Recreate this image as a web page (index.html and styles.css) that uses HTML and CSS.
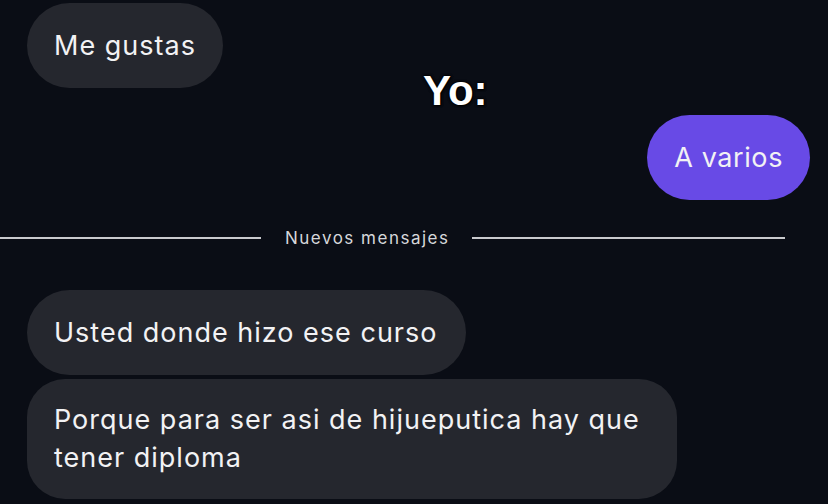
FILE: index.html
```html
<!DOCTYPE html>
<html lang="es">
<head>
<meta charset="utf-8">
<link rel="stylesheet" href="styles.css">
</head>
<body>
<div class="chat">
  <div class="bubble in first">Me gustas</div>
  <div class="caption">Yo:</div>
  <div class="bubble out">A varios</div>
  <div class="divider">
    <span class="line left"></span>
    <span class="label">Nuevos mensajes</span>
    <span class="line right"></span>
  </div>
  <div class="bubble in third">Usted donde hizo ese curso</div>
  <div class="bubble in fourth">Porque para ser asi de hijueputica hay que<br>tener diploma</div>
</div>
</body>
</html>
```
FILE: styles.css
```css
html, body {
  margin: 0;
  padding: 0;
  background: #0a0d15;
  width: 828px;
  height: 504px;
  overflow: hidden;
}
.chat {
  position: relative;
  display: flex;
  flex-direction: column;
  align-items: flex-start;
  font-family: Inter, "Liberation Sans", Arial, sans-serif;
  color: #f2f2f4;
}
.bubble {
  font-size: 27px;
  letter-spacing: 1px;
  line-height: 41px;
  border-radius: 43px;
  padding: 22px 27px;
  box-sizing: border-box;
}
.in {
  background: #25272e;
  margin-left: 27px;
}
.first {
  margin-top: 3px;
}
.out {
  align-self: flex-end;
  margin-right: 18px;
  margin-top: 27px;
  background: #684ae6;
  padding: 22px 27px 22px 27px;
  letter-spacing: 0.6px;
}
.caption {
  position: absolute;
  left: 423px;
  top: 67px;
  font-family: "Liberation Sans", Arial, sans-serif;
  font-size: 42px;
  font-weight: 700;
  color: #fff;
  text-shadow: 0 0 3px #000, 0 0 3px #000, 1px 1px 2px #000;
}
.divider {
  align-self: stretch;
  display: flex;
  align-items: center;
  margin-top: 28px;
  height: 20px;
}
.line {
  height: 2px;
  background: #c9cacd;
}
.line.left {
  width: 261px;
}
.line.right {
  flex: 1;
  margin-right: 43px;
}
.label {
  font-size: 17px;
  color: #d6d7da;
  letter-spacing: 1.5px;
  margin: 0 23px 0 24px;
}
.third {
  margin-top: 42px;
  padding-left: 27px;
  padding-right: 29px;
}
.fourth {
  margin-top: 4px;
  padding: 22px 37px 22px 27px;
  border-radius: 38px;
  line-height: 38px;
}
```
